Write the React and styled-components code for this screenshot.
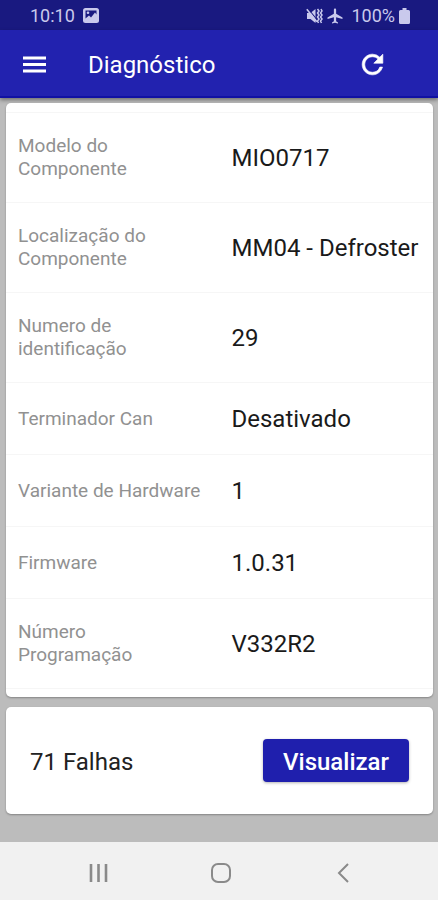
import styled, { createGlobalStyle } from "styled-components";
import { MdAirplanemodeActive } from "react-icons/md";

const dados = [
    { nome: "Modelo do\nComponente", valor: "MIO0717" },
    { nome: "Localização do\nComponente", valor: "MM04 - Defroster" },
    { nome: "Numero de\nidentificação", valor: "29" },
    { nome: "Terminador Can", valor: "Desativado" },
    { nome: "Variante de Hardware", valor: "1" },
    { nome: "Firmware", valor: "1.0.31" },
    { nome: "Número\nProgramação", valor: "V332R2" },
];

function IconeImagem() {
    return (
        <svg width="16" height="15" viewBox="0 0 16 15" aria-hidden="true">
            <rect width="16" height="15" rx="2.500" fill="currentColor" />
            <path d="M2.500 2.500h11v4l-1.500-2-4 5-2-2-3.500 3z" fill="#191980" />
            <circle cx="5" cy="4.800" r="1.300" fill="currentColor" />
        </svg>
    );
}

function IconeMudo() {
    return (
        <svg width="17" height="16" viewBox="0 0 17 16" aria-hidden="true">
            <path d="M1 5h3.500l5-4v14l-5-4H1z" fill="currentColor" />
            <path d="M2 .5l9.500 12" stroke="#191980" strokeWidth="1.200" />
            <path d="M.8 1.300l10 12.500" stroke="currentColor" strokeWidth="1.600" />
            <path d="M11.500 1l1.500 2-1.500 2 1.500 2-1.500 2 1.500 2-1.500 2 1 2M15 1l1 2-1.500 2 1.500 2-1.500 2 1.500 2-1.500 2 1 2" fill="none" stroke="currentColor" strokeWidth="1.500" />
        </svg>
    );
}

function IconeBateria() {
    return (
        <svg width="11" height="16" viewBox="0 0 11 16" fill="currentColor" aria-hidden="true">
            <path d="M3.500 0h4v2H9.500a1.500 1.500 0 0 1 1.500 1.500v11a1.500 1.500 0 0 1-1.500 1.500h-8A1.500 1.500 0 0 1 0 14.500v-11A1.500 1.500 0 0 1 1.500 2h2z" />
        </svg>
    );
}

export default function App() {
    return (
        <Pagina>
            <GlobalStyle />
            <BarraStatus>
                <Grupo $gap={8}>
                    <span>10:10</span>
                    <IconeImagem />
                </Grupo>
                <Grupo $gap={3}>
                    <IconeMudo />
                    <MdAirplanemodeActive size={18} />
                    <Bateria>
                        100%
                        <IconeBateria />
                    </Bateria>
                </Grupo>
            </BarraStatus>

            <Topo>
                <BotaoIcone aria-label="Menu">
                    <svg width="31" height="31" viewBox="0 0 31 31" stroke="currentColor" strokeWidth="3.200">
                        <path d="M4 9h23M4 15.500h23M4 22h23" />
                    </svg>
                </BotaoIcone>
                <h1>Diagnóstico</h1>
                <BotaoIcone aria-label="Atualizar">
                    <svg width="31" height="31" viewBox="0 0 24 24" fill="currentColor" stroke="currentColor" strokeWidth="0.500">
                        <path d="M17.650 6.350A7.958 7.958 0 0 0 12 4c-4.420 0-7.990 3.580-7.990 8s3.570 8 7.990 8c3.730 0 6.840-2.550 7.730-6h-2.080A5.990 5.990 0 0 1 12 18c-3.310 0-6-2.690-6-6s2.690-6 6-6c1.660 0 3.140.690 4.220 1.780L13 11h7V4l-2.350 2.350z" />
                    </svg>
                </BotaoIcone>
            </Topo>

            <Conteudo>
                <CartaoDados>
                    <Tabela>
                        <tbody>
                            {dados.map((d) => (
                                <tr key={d.nome}>
                                    <Nome scope="row">{d.nome}</Nome>
                                    <Valor>{d.valor}</Valor>
                                </tr>
                            ))}
                        </tbody>
                    </Tabela>
                </CartaoDados>

                <CartaoFalhas>
                    <p>71 Falhas</p>
                    <Botao>Visualizar</Botao>
                </CartaoFalhas>
            </Conteudo>

            <Navegacao>
                <BotaoIcone aria-label="Recentes">
                    <svg width="20" height="20" viewBox="0 0 20 20" stroke="currentColor" strokeWidth="2.600">
                        <path d="M2 1v18M9.500 1v18M17 1v18" />
                    </svg>
                </BotaoIcone>
                <BotaoIcone aria-label="Início">
                    <svg width="20" height="20" viewBox="0 0 20 20" fill="none" stroke="currentColor" strokeWidth="2">
                        <rect x="1" y="1" width="18" height="18" rx="6" />
                    </svg>
                </BotaoIcone>
                <BotaoIcone aria-label="Voltar">
                    <svg width="20" height="20" viewBox="0 0 20 20" fill="none" stroke="currentColor" strokeWidth="2">
                        <path d="M15 1L6 10l9 9" />
                    </svg>
                </BotaoIcone>
            </Navegacao>
        </Pagina>
    );
}

const GlobalStyle = createGlobalStyle`
    * {
        box-sizing: border-box;
    }
    body, h1, p {
        margin: 0;
    }
    body, button {
        font-family: 'Roboto', sans-serif;
    }
`

const Pagina = styled.div`
    min-height: 100vh;
    display: flex;
    flex-direction: column;
    background-color: #BCBCBC;
`

const BarraStatus = styled.div`
    display: flex;
    align-items: center;
    justify-content: space-between;
    height: 30px;
    padding: 1px 28px 0 30px;
    background-color: #191980;
    color: #C9C9EC;
    font-size: 18px;
`

const Grupo = styled.div`
    display: flex;
    align-items: center;
    gap: ${(props) => props.$gap}px;
`

const Bateria = styled.span`
    display: flex;
    align-items: center;
    gap: 4px;
    margin-left: 4px;
`

const BotaoIcone = styled.button`
    display: flex;
    align-items: center;
    justify-content: center;
    padding: 0;
    border: none;
    background: none;
    color: inherit;
    cursor: pointer;
`

const Topo = styled.header`
    display: flex;
    align-items: center;
    height: 68px;
    padding: 2px 50px 0 19px;
    border-bottom: 2px solid #1111A3;
    box-shadow: 0 2px 4px rgba(0, 0, 0, 0.4);
    background-color: #2222AF;
    color: #FFFFFF;
    h1{
        flex: 1;
        margin-left: 38px;
        padding-top: 2px;
        font-size: 24px;
        font-weight: 400;
    }
`

const Conteudo = styled.main`
    flex: 1;
    display: flex;
    flex-direction: column;
    gap: 10px;
    padding: 5px 5px 28px 6px;
`

const Cartao = styled.section`
    border-radius: 5px;
    background-color: #FFFFFF;
    box-shadow: 0 1px 2px rgba(0, 0, 0, 0.3);
`

const CartaoDados = styled(Cartao)`
    padding: 9px 0 8px;
`

const CartaoFalhas = styled(Cartao)`
    display: flex;
    align-items: center;
    justify-content: space-between;
    padding: 32px 24px;
    p{
        padding-top: 2px;
        font-size: 24px;
        color: #222222;
    }
`

const Tabela = styled.table`
    width: 100%;
    border-spacing: 0;
    border-top: 1px solid #F6F6F6;
    th, td{
        padding: 21px 0 22px 12px;
        border-bottom: 1px solid #F6F6F6;
        text-align: left;
        vertical-align: middle;
    }
`

const Nome = styled.th`
    width: 50%;
    font-size: 19px;
    line-height: 23px;
    font-weight: 400;
    white-space: pre-line;
    color: #919191;
`

const Valor = styled.td`
    && {
        padding: 22px 0 21px 12px;
    }
    font-size: 24px;
    line-height: 28px;
    white-space: nowrap;
    color: #1A1A1A;
`

const Botao = styled.button`
    height: 43px;
    padding: 2px 20px 0;
    border: none;
    border-radius: 4px;
    background-color: #1F1FAD;
    box-shadow: 0 1px 3px rgba(0, 0, 0, 0.3);
    color: #FFFFFF;
    font-size: 24px;
    font-weight: 500;
    cursor: pointer;
`

const Navegacao = styled.nav`
    display: grid;
    grid-template-columns: repeat(3, 1fr);
    height: 58px;
    padding: 3px 34px 0 38px;
    background-color: #F1F1F1;
    color: #8A8A8A;
`
